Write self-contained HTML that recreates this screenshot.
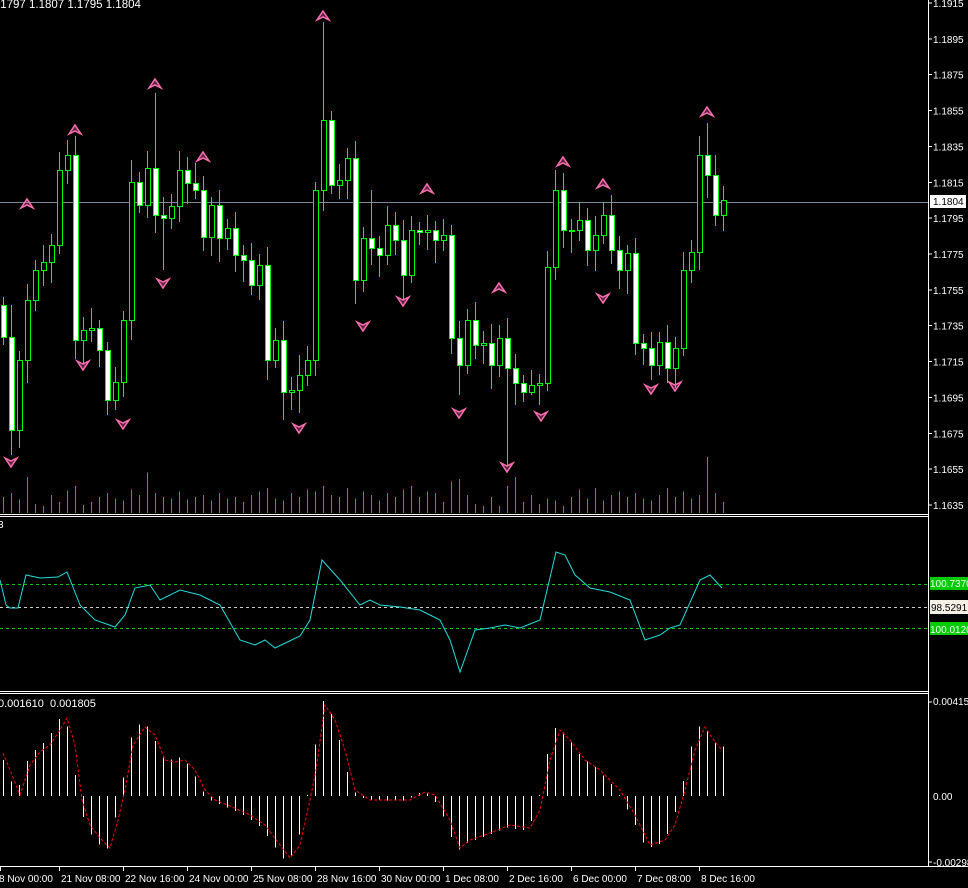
<!DOCTYPE html>
<html><head><meta charset="utf-8"><style>
html,body{margin:0;padding:0;background:#000;width:968px;height:888px;overflow:hidden}
svg{display:block}
text{font-family:"Liberation Sans",sans-serif;font-size:11px;fill:#fff}
</style></head><body>
<svg id="s" width="968" height="888" xmlns="http://www.w3.org/2000/svg"></svg>
<script>
const S=document.getElementById('s');let h='';
function L(x1,y1,x2,y2,c,w,d){h+=`<line x1="${x1}" y1="${y1}" x2="${x2}" y2="${y2}" stroke="${c}" stroke-width="${w||1}" ${d?`stroke-dasharray="${d}"`:''} shape-rendering="crispEdges"/>`}
function T(x,y,t,a){h+=`<text x="${x}" y="${y}" ${a||''}>${t}</text>`}
const oc=[[305,337],[337,430],[430,360],[360,300],[300,270],[270,262],[262,245],[245,170],[170,155],[155,340],[340,330],[330,328],[328,350],[350,400],[400,382],[382,320],[320,182],[182,205],[205,168],[168,215],[215,218],[218,206],[206,170],[170,183],[183,190],[190,237],[237,205],[205,238],[238,228],[228,255],[255,260],[260,285],[285,265],[265,360],[360,340],[340,392],[392,390],[390,375],[375,360],[360,190],[190,120],[120,185],[185,180],[180,158],[158,280],[280,238],[238,248],[248,255],[255,225],[225,240],[240,275],[275,230],[230,232],[232,230],[230,240],[240,235],[235,338],[338,365],[365,320],[320,345],[345,343],[343,365],[365,338],[338,368],[368,383],[383,392],[392,385],[385,383],[383,267],[267,190],[190,230],[230,230],[230,220],[220,250],[250,235],[235,215],[215,250],[250,270],[270,253],[253,343],[343,348],[348,365],[365,342],[342,368],[368,348],[348,270],[270,252],[252,155],[155,175],[175,215],[215,200]];
const hiS={1:305,8:140,16:160,19:93,40:22,46:190,69:170,88:123,12:320};
const loS={1:455,13:415,35:420,50:300,57:395,63:465,66:395,81:380,84:388,20:270};
const vol=[18,22,15,40,10,8,20,12,25,30,9,12,18,22,16,14,26,20,45,22,18,16,24,15,18,20,14,22,16,18,12,20,24,28,16,14,22,18,26,24,30,20,18,28,16,24,20,14,22,18,26,30,18,24,22,12,35,38,20,10,8,18,8,30,40,12,20,10,16,14,8,18,26,16,28,14,20,24,18,22,16,14,20,28,18,24,16,20,62,22,12,4];
oc.forEach((c,i)=>{const x=3+i*8;L(x+.5,513-vol[i]*0.9,x+.5,513,'#2b2')});
L(0,202.5,928,202.5,'#778899');
oc.forEach((c,i)=>{const x=3+i*8;const [o,cl]=c;const top=Math.min(o,cl),bot=Math.max(o,cl);
 const hi=hiS[i]!==undefined?hiS[i]:top-8-(i*7%13);const lo=loS[i]!==undefined?loS[i]:bot+8+(i*5%17);
 L(x+.5,hi,x+.5,lo,'#0f0');
 const bh=Math.max(1,bot-top);
 h+=`<rect x="${x-1.5}" y="${top+.5}" width="5" height="${bh}" fill="${cl>o?'#fff':'#000'}" stroke="#0f0" stroke-width="1" shape-rendering="crispEdges"/>`;});
function up(x,y){h+=`<path d="M${x-6} ${y+4}L${x} ${y-5}L${x+6} ${y+4}L${x} ${y+1}Z" fill="#ff6eb4" fill-opacity=".35" stroke="#ff6eb4" stroke-width="1.5"/>`}
function dn(x,y){h+=`<path d="M${x-6} ${y-4}L${x} ${y+5}L${x+6} ${y-4}L${x} ${y-1}Z" fill="#ff6eb4" fill-opacity=".35" stroke="#ff6eb4" stroke-width="1.5"/>`}
[[27,204],[75,130],[155,84],[203,157],[323,16],[427,189],[499,288],[563,162],[603,184],[707,112]].forEach(p=>up(p[0],p[1]));
[[11,462],[83,365],[123,424],[163,283],[299,428],[363,326],[403,301],[459,413],[507,467],[541,416],[603,298],[651,389],[675,386]].forEach(p=>dn(p[0],p[1]));
T(-3,8,'.1797 1.1807 1.1795 1.1804','style="font-size:11.5px"');
L(0,514.5,928,514.5,'#fff');L(0,516.5,928,516.5,'#fff');
L(0,691.5,928,691.5,'#fff');L(0,693.5,928,693.5,'#fff');
L(928.5,0,928.5,866,'#fff');
for(let i=0;i<15;i++){const y=3+i*35.86;const p=(1.1915-i*0.002).toFixed(4);L(928,y,932,y,'#fff');T(933,y+4,p,'style="font-size:10px"')}
h+=`<rect x="930" y="195" width="36" height="13" fill="#fff"/>`;T(933,205,'1.1804','style="font-size:10px;fill:#000"');
T(-2,528,'3','style="font-size:10px"');
L(0,584.5,928,584.5,'#0c0',1,'3 3');L(0,607.5,928,607.5,'#ccc',1,'3 3');L(0,628.5,928,628.5,'#0c0',1,'3 3');
const cy=[[0,580],[6,605],[10,608],[18,608],[26,575],[40,578],[58,577],[67,572],[80,605],[95,620],[115,627],[125,615],[135,588],[150,585],[160,600],[180,590],[200,595],[220,605],[240,640],[255,645],[265,640],[275,648],[300,636],[310,620],[322,560],[340,580],[360,605],[370,600],[380,605],[400,607],[420,610],[440,620],[450,640],[460,672],[475,630],[490,628],[505,625],[520,628],[540,620],[556,552],[565,555],[575,575],[590,588],[610,592],[630,600],[645,640],[660,635],[670,628],[680,625],[700,580],[710,575],[722,588]];
h+=`<polyline points="${cy.map(p=>p.join(',')).join(' ')}" fill="none" stroke="#2dd" stroke-width="1"/>`;
h+=`<rect x="930" y="577" width="38" height="13" fill="#0c0"/>`;T(930,587,'100.7370','style="font-size:10px"');
h+=`<rect x="930" y="600" width="38" height="14" fill="#f5f0e6"/>`;T(931,611,'98.5291','style="font-size:10px;fill:#000"');
h+=`<rect x="930" y="622" width="38" height="13" fill="#0c0"/>`;T(930,633,'100.0120','style="font-size:10px"');
T(-2,707,'0.001610&#160;&#160;0.001805','style="font-size:11px"');
const rl=[[3,753],[10,770],[20,795],[30,765],[40,752],[50,745],[60,730],[67,718],[75,745],[82,800],[90,825],[100,838],[110,848],[118,820],[125,790],[133,745],[145,727],[155,735],[165,760],[175,762],[185,760],[195,770],[205,790],[215,800],[230,806],[250,815],[265,825],[280,845],[290,858],[300,845],[310,800],[316,770],[325,705],[335,720],[345,750],[355,790],[370,800],[390,800],[410,800],[425,792],[435,795],[450,820],[460,848],[470,840],[490,833],[510,825],[530,828],[540,810],[550,760],[560,730],[570,740],[585,760],[600,770],[620,790],[635,815],[650,845],[665,840],[675,825],[685,790],[695,750],[705,727],[715,742],[722,750]];
function ry(x){for(let i=1;i<rl.length;i++){if(x<=rl[i][0]){const a=rl[i-1],b=rl[i];return a[1]+(b[1]-a[1])*(x-a[0])/(b[0]-a[0])}}return 750}
oc.forEach((c,i)=>{const x=3+i*8;const v=ry(x+4);const y=796+(v-796)*1.08;L(x+.5,796,x+.5,y,'#fff')});
h+=`<polyline points="${rl.map(p=>p.join(',')).join(' ')}" fill="none" stroke="#f00" stroke-width="1" stroke-dasharray="3 2"/>`;
L(928,702,932,702,'#fff');T(933,705,'0.00415','style="font-size:10px"');
T(933,800,'0.00','style="font-size:10px"');
L(928,862,932,862,'#fff');T(933,866,'-0.00298','style="font-size:10px"');
L(0,866.5,968,866.5,'#fff');
[['8 Nov 00:00',0],['21 Nov 08:00',59],['22 Nov 16:00',123],['24 Nov 00:00',187],['25 Nov 08:00',251],['28 Nov 16:00',315],['30 Nov 00:00',379],['1 Dec 08:00',443],['2 Dec 16:00',507],['6 Dec 00:00',571],['7 Dec 08:00',635],['8 Dec 16:00',699]].forEach(a=>{L(a[1]+.5,866,a[1]+.5,871,'#fff');T(a[1]?a[1]+2:-1,882,a[0],'style="font-size:10px"')});
S.innerHTML=h;
</script>
</body></html>
